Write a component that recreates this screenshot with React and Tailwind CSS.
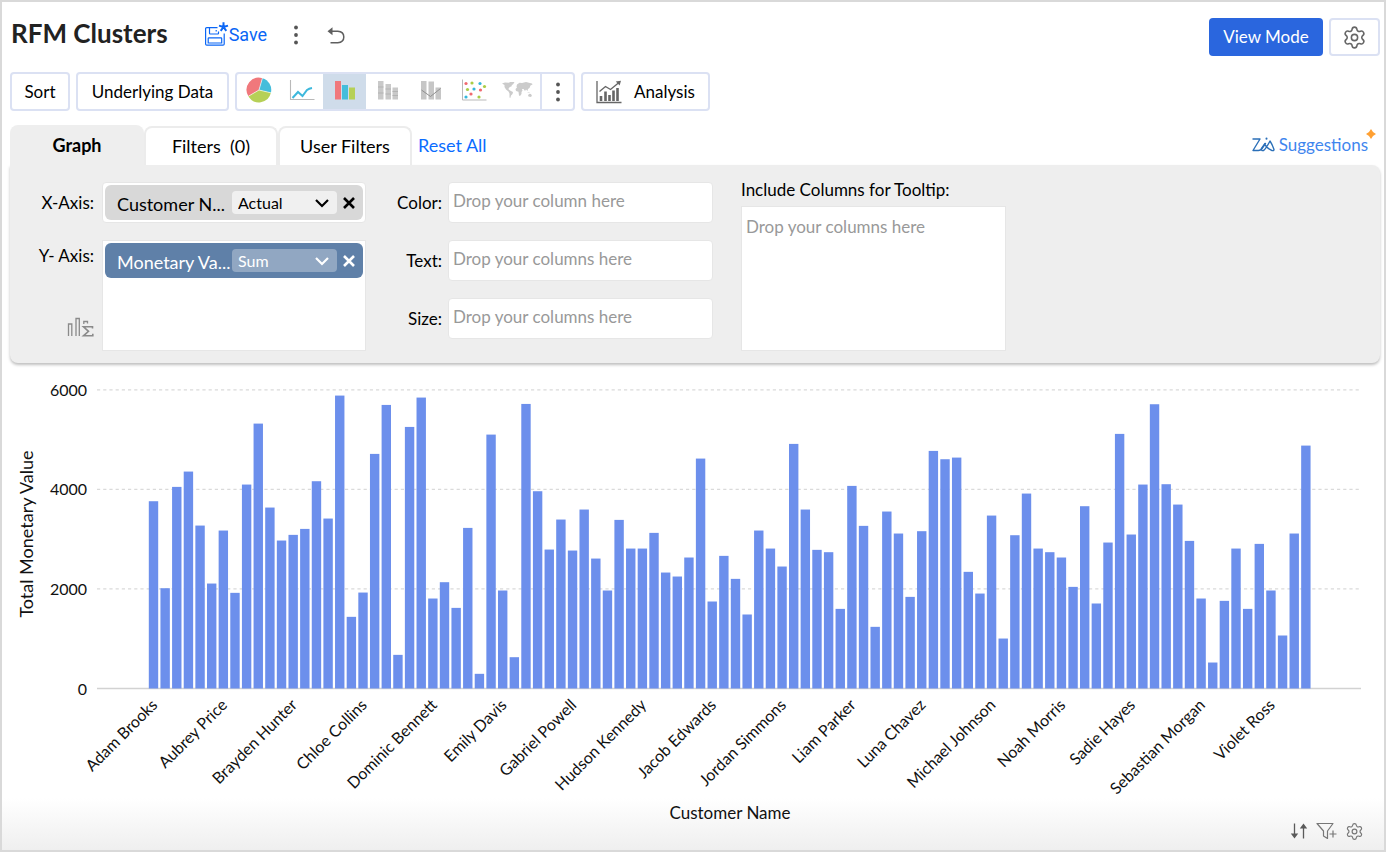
import React from 'react'
import { Settings } from 'lucide-react'

const VALUES = [
  3763, 2015, 4051, 4359, 3274, 2109, 3174, 1922, 4098, 5323, 3636, 2973, 3087, 3207, 4165, 3415, 5886, 1440, 1928, 4714,
  5698, 676, 5256, 5846, 1808, 2136, 1620, 3227, 295, 5102, 1969, 629, 5718, 3964, 2792, 3395, 2772, 3596, 2611, 1969,
  3388, 2812, 2812, 3127, 2330, 2250, 2632, 4620, 1748, 2665, 2203, 1487, 3174, 2812, 2451, 4915, 3596, 2786, 2739, 1600,
  4071, 3268, 1239, 3556, 3114, 1841, 3161, 4774, 4607, 4640, 2344, 1908, 3475, 1004, 3080, 3917, 2812, 2739, 2632, 2042,
  3663, 1708, 2933, 5116, 3094, 4098, 5712, 4105, 3696, 2966, 1808, 522, 1761, 2812, 1600, 2906, 1969, 1065, 3114, 4881,
]

// one name for every sixth bar
const NAMES = [
  'Adam Brooks', 'Aubrey Price', 'Brayden Hunter', 'Chloe Collins', 'Dominic Bennett', 'Emily Davis',
  'Gabriel Powell', 'Hudson Kennedy', 'Jacob Edwards', 'Jordan Simmons', 'Liam Parker', 'Luna Chavez',
  'Michael Johnson', 'Noah Morris', 'Sadie Hayes', 'Sebastian Morgan', 'Violet Ross',
]

const TICKS = [0, 2000, 4000, 6000]

const PieIcon = () => (
  <svg width="26" height="26" viewBox="0 0 26 26">
    <path d="M13 13 L2.4 19.2 A12.2 12.2 0 0 1 16.4 1.2 Z" fill="#f0787c" />
    <path d="M13 13 L16.4 1.2 A12.2 12.2 0 0 1 24.9 15.8 Z" fill="#45bddb" />
    <path d="M13 13 L24.9 15.8 A12.2 12.2 0 0 1 2.4 19.2 Z" fill="#b6d057" />
    <path d="M13 13 L2.4 19.2 M13 13 L16.4 1.2 M13 13 L24.9 15.8" stroke="#fff" strokeWidth=".6" />
  </svg>
)

const LineIcon = () => (
  <svg width="26" height="22" viewBox="0 0 26 22" fill="none">
    <path d="M1.5 1 V20.5 H25.5" stroke="#b9b9b9" strokeWidth="1.1" />
    <path d="M3.5 19 L9 13 L13.5 17 L18 11 Q20 9.5 23 9" stroke="#3db8dc" strokeWidth="2" />
  </svg>
)

const BarIcon = () => (
  <svg width="22" height="20" viewBox="0 0 22 20">
    <rect x="1" y="1" width="6" height="18.5" fill="#f0787c" />
    <rect x="8" y="5" width="6" height="14.5" fill="#45bddb" />
    <rect x="15" y="7.5" width="6" height="12" fill="#b6d057" />
  </svg>
)

const StackedIcon = () => (
  <svg width="22" height="20" viewBox="0 0 22 20">
    <path d="M1 1h5.5v18.5h-5.5z M8.5 4h5.5v15.5h-5.5z M15.5 7.5h5.5v12h-5.5z" fill="#c9c9c9" />
    <path d="M1 6.500h5.500v1h-5.500z M1 12.500h5.500v1h-5.500z M8.500 8.500h5.500v1h-5.500z M8.500 13.500h5.500v1h-5.500z M15.500 11h5.500v1h-5.500z M15.500 15h5.500v1h-5.500z" fill="#b4b4b4" />
  </svg>
)

const ComboIcon = () => (
  <svg width="22" height="20" viewBox="0 0 22 20">
    <path d="M1 1h5.5v18.5h-5.5z M8.500 1.500h5.5v18h-5.5z M15.500 7.500h5.500v12h-5.500z" fill="#c6c6c6" />
    <path d="M1.500 10 L10.500 16.500 L20.500 8.500" fill="none" stroke="#8f8f8f" strokeWidth="1" />
  </svg>
)

const ScatterIcon = () => (
  <svg width="26" height="22" viewBox="0 0 26 22">
    <path d="M1.5 0.5 V21 H25.5" fill="none" stroke="#b9b9b9" strokeWidth="1" />
    <g fill="#f0696f"><circle cx="5" cy="4.5" r="1.6" /><circle cx="19.500" cy="11" r="1.6" /><circle cx="10" cy="15" r="1.6" /></g>
    <g fill="#a9cc45"><circle cx="11" cy="4" r="1.6" /><circle cx="23.500" cy="7.5" r="1.6" /><circle cx="6.5" cy="10.5" r="1.6" /><circle cx="18" cy="18" r="1.6" /></g>
    <g fill="#35b7dc"><circle cx="19" cy="4.500" r="1.6" /><circle cx="13" cy="10" r="1.6" /><circle cx="5" cy="18" r="1.6" /></g>
  </svg>
)

const MapIcon = () => (
  <svg width="32" height="18" viewBox="0 0 32 18" fill="#cbcbcb">
    <path d="M1 2.500 L4 1.500 L8 1.800 L9 1 L13.500 1 L12 3.500 L10.500 4 L11 5 L9 6 L7.800 7 L7.500 8.300 L9 9.500 L12 11 L11.500 13 L10 14.500 L9.300 17 L8.500 16.500 L8.500 12.500 L7.500 10.500 L5 8.500 L3.500 6 L3.500 4 Z" />
    <path d="M15.500 5.500 L16 3.500 L18.500 1.800 L21 2 L25 1 L31 2.500 L31.500 3.500 L29.500 4.500 L28.500 7 L27 8 L26.500 10 L25 8.500 L24 10 L22.500 8 L21 8 L21.500 9.500 L20.500 11 L20.500 13 L19 15 L18 14.500 L17.500 10.800 L15 10 L14.500 8 L16 6.500 Z" />
    <path d="M26 11 L29 11.500 L28 12 Z M27 14 L28.500 12.800 L30 13 L31 15 L29.500 16 L27.500 15.500 Z" />
  </svg>
)

const DotsIcon = () => (
  <svg width="6" height="20" viewBox="0 0 6 20" fill="#555">
    <circle cx="3" cy="2.5" r="1.9" />
    <circle cx="3" cy="10" r="1.9" />
    <circle cx="3" cy="17.5" r="1.9" />
  </svg>
)

const SaveIcon = () => (
  <svg width="25" height="26" viewBox="0 0 25 26" fill="none" stroke="#0a66f5" strokeWidth="1.2">
    <path d="M13.500 5.600 H2.800 Q1.600 5.600 1.600 6.800 V22 Q1.600 23.200 2.800 23.200 H19 Q20.200 23.200 20.200 22 V11.500" />
    <path d="M5.500 5.800 V11.300 Q5.500 12 6.200 12 H13.800 Q14.500 12 14.500 11.300 V9.500" />
    <path d="M4.200 21 V16.500 Q4.200 15.800 4.900 15.800 H17 Q17.700 15.800 17.700 16.500 V21 Z" />
    <path d="M12.200 8 V9.600" />
    <path d="M19.500 5 V0.300 M19.500 5 L24 3.600 M19.500 5 L22.300 8.900 M19.500 5 L16.700 8.900 M19.500 5 L15 3.600" strokeWidth="2" />
  </svg>
)

const UndoIcon = () => (
  <svg width="18" height="18" viewBox="0 0 18 18" fill="none" stroke="#5f5f5f" strokeWidth="1.5">
    <path d="M3 5.200 H10.800 Q16.800 5.600 16.800 11 Q16.800 16.300 10.800 16.700 H3.500" />
    <path d="M5.500 1.200 V9.200 L0.500 5.200 Z" fill="#5f5f5f" stroke="none" />
  </svg>
)

const AnalysisIcon = () => (
  <svg width="26" height="24" viewBox="0 0 26 24" fill="none" stroke="#666">
    <path d="M1 1 V22.5 H25.5" strokeWidth="1.3" />
    <path d="M3.500 11.500 L9.500 6.500 L14.500 9.500 L23 2.500" strokeWidth="1.4" />
    <path d="M19.800 1.500 L25 0.800 L23.600 5.500 Z" fill="#666" stroke="none" />
    <path d="M5 16 V21 M9.500 11.500 V21 M13.500 15 V21 M17.500 10.500 V21 M21.500 8 V21" strokeWidth="2.6" />
  </svg>
)

const ZiaIcon = () => (
  <svg width="23" height="16" viewBox="0 0 23 16" fill="none" stroke="#2b6fb8" strokeWidth="1.4" strokeLinejoin="round" strokeLinecap="round">
    <path d="M1 2 H8 L1 13.500 H6.500 Q8.500 13.500 10 11.500 L13.500 6.500" />
    <path d="M13 6.500 L9.500 11.500 Q9 14 11.500 13.500 Q13.500 12.500 18 4 Q20 7 22 12.500 Q22 14 20 13.500 Q16 12 13.500 8.500" />
    <path d="M14.500 1.500 V1.700" strokeWidth="2" />
  </svg>
)

const SummaryIcon = () => (
  <svg width="27" height="20" viewBox="0 0 27 20" fill="none" stroke="#8a8a8a" strokeWidth="1.3">
    <path d="M1.500 19 V7 H4.800 V19" />
    <path d="M9 19 V1.500 H12.300 V19" />
    <path d="M16.800 7 V4.500 H20.500 V6.500" />
    <path d="M25.500 11.500 V9.800 H16.500 L21.500 14.300 L16.500 18.800 H25.800 V16.800" strokeWidth="1.6" />
  </svg>
)

const CloseIcon = () => (
  <svg width="12" height="12" viewBox="0 0 12 12" fill="none" stroke="currentColor" strokeWidth="2.6">
    <path d="M1 1 L11 11 M11 1 L1 11" />
  </svg>
)

const SortArrowsIcon = () => (
  <svg width="18" height="18" viewBox="0 0 18 18" fill="none" stroke="#5a5a5a" strokeWidth="1.3">
    <path d="M4.500 1.500 V12 M13.500 16.500 V6" />
    <path d="M0.800 11.500 H8.200 L4.500 16.500 Z M9.800 6.500 H17.200 L13.500 1.500 Z" fill="#5a5a5a" stroke="none" />
  </svg>
)

const FilterAddIcon = () => (
  <svg width="21" height="18" viewBox="0 0 21 18" fill="none" stroke="#777" strokeWidth="1.2">
    <path d="M1 1.500 H17 L11.500 9 V16.500 L7.500 14 V9 Z" strokeLinejoin="round" />
    <path d="M13.500 12 H20.500 M17 8.500 V15.500" />
  </svg>
)

const CHART_TYPES = [
  { key: 'pie', label: 'Pie', icon: PieIcon },
  { key: 'line', label: 'Line', icon: LineIcon },
  { key: 'bar', label: 'Bar', icon: BarIcon },
  { key: 'stacked', label: 'Stacked bar', icon: StackedIcon },
  { key: 'combo', label: 'Combination', icon: ComboIcon },
  { key: 'scatter', label: 'Scatter', icon: ScatterIcon },
  { key: 'map', label: 'Map', icon: MapIcon },
]

const SHELVES = [
  { key: 'color', label: 'Color:', hint: 'Drop your column here' },
  { key: 'text', label: 'Text:', hint: 'Drop your columns here' },
  { key: 'size', label: 'Size:', hint: 'Drop your columns here' },
]

function ToolButton({ className = '', children }) {
  return (
    <button className={`flex items-center justify-center rounded border-2 border-[#dbe1f3] bg-white ${className}`}>
      {children}
    </button>
  )
}

function ColumnPill({ id, name, fn, blue }) {
  return (
    <div
      className={`flex h-[35px] items-center rounded-md pl-3 pr-2 ${
        blue ? 'bg-[#5f80a8] text-white' : 'bg-[#d8d8d8] text-black'
      }`}
    >
      <span className="w-[115px] shrink-0 whitespace-nowrap pt-0.5 text-lg leading-6">{name}</span>
      <span className="relative flex-1">
        <select
          id={id}
          defaultValue={fn}
          className={`block h-[23px] w-full appearance-none rounded px-1.5 text-base leading-5 outline-none ${
            blue ? 'bg-[#91a7c2]' : 'bg-[#f0f0f0]'
          }`}
        >
          <option>{fn}</option>
        </select>
        <svg className="pointer-events-none absolute right-2 top-2" width="14" height="9" viewBox="0 0 14 9" fill="none" stroke="currentColor" strokeWidth="2.2">
          <path d="M1 1 L7 7 L13 1" />
        </svg>
      </span>
      <button aria-label={`Remove ${name}`} className="ml-1.5">
        <CloseIcon />
      </button>
    </div>
  )
}

function Chart() {
  const base = 325.5
  const y = (v) => base - (v * 298.6) / 6000
  const x = (i) => 143.5 + i * 11.64

  return (
    <svg viewBox="0 0 1370 462" className="block w-full fill-[#111] text-base" role="img" aria-label="Total monetary value by customer">
      {TICKS.map((t) => (
        <g key={t}>
          <line
            x1="87"
            x2="1351"
            y1={y(t)}
            y2={y(t)}
            stroke={t === 0 ? '#d2d2d2' : '#dadada'}
            strokeWidth={t === 0 ? 1.5 : 1.3}
            strokeDasharray={t === 0 ? undefined : '3.2 3'}
          />
          <text x="77" y={y(t) + 6} textAnchor="end">{t}</text>
        </g>
      ))}
      {VALUES.map((v, i) => (
        <rect key={i} x={x(i) - 4.7} y={y(v)} width="9.4" height={base - y(v)} fill="#6c8fec" />
      ))}
      {NAMES.map((name, i) => (
        <text key={name} textAnchor="end" transform={`translate(${x(i * 6) + 5} 343) rotate(-45)`}>
          {name}
        </text>
      ))}
      <text textAnchor="middle" transform="translate(23 171) rotate(-90)" className="text-lg">Total Monetary Value</text>
      <text x="720" y="456" textAnchor="middle" className="text-[17px]">Customer Name</text>
    </svg>
  )
}

export default function App() {
  return (
    <div className="min-h-screen border-2 border-[#d9d9d9] bg-[linear-gradient(to_bottom,#fff_calc(100%-52px),#efefef)] pl-2 pr-1 pt-4 font-['Lato',sans-serif] text-[17px] leading-6 text-black">
      <header className="flex h-[38px] items-center">
        <h1 className="pb-2 pl-px text-[26px] font-bold leading-8 text-[#222]">RFM Clusters</h1>
        <button className="ml-9 flex items-center pb-1 font-['Roboto',sans-serif] text-lg leading-6 text-[#0a66f5]">
          <SaveIcon />
          Save
        </button>
        <button aria-label="More" className="ml-[26px] pb-1">
          <DotsIcon />
        </button>
        <button aria-label="Undo" className="ml-7 pb-1">
          <UndoIcon />
        </button>
        <button className="ml-auto h-full w-[114px] rounded bg-[#2a66de] text-white">View Mode</button>
        <ToolButton className="ml-1.5 h-full w-[51px]">
          <Settings size={25} strokeWidth={1.5} color="#666" aria-label="Settings" />
        </ToolButton>
      </header>

      <div className="mt-4 flex h-[39px] gap-1.5">
        <ToolButton className="w-[60px]">Sort</ToolButton>
        <ToolButton className="w-[153px]">Underlying Data</ToolButton>
        <div className="flex rounded border-2 border-[#dbe1f3]">
          {CHART_TYPES.map(({ key, label, icon: IconCmp }) => (
            <button
              key={key}
              aria-label={label}
              className={`flex w-[43px] items-center justify-center pb-1 ${key === 'bar' ? 'bg-[#cfdcea]' : ''}`}
            >
              <IconCmp />
            </button>
          ))}
          <button aria-label="More chart types" className="ml-0.5 flex w-[33px] items-center justify-center border-l-2 border-[#dbe1f3]">
            <DotsIcon />
          </button>
        </div>
        <ToolButton className="w-[129px] gap-3">
          <AnalysisIcon />
          Analysis
        </ToolButton>
      </div>

      <div className="mt-3.5 flex h-10 items-end text-lg leading-6">
        <button className="h-10 w-[134px] rounded-t-lg bg-[#eee] font-bold">Graph</button>
        <button className="h-[39px] w-[134px] whitespace-pre rounded-t-lg border-2 border-b-0 border-[#ececec] bg-white pb-0.5">{'Filters  (0)'}</button>
        <button className="h-[39px] w-[134px] rounded-t-lg border-2 border-b-0 border-[#ececec] bg-white pb-0.5">User Filters</button>
        <a href="#reset" className="mb-2 ml-1.5 text-[#0a6cff]">Reset All</a>
        <a href="#suggestions" className="relative mb-2 ml-auto mr-3 flex items-center gap-1 text-[17px] text-[#3f86ee]">
          <ZiaIcon />
          Suggestions
          <svg className="absolute -right-2 -top-1" width="10" height="10" viewBox="0 0 10 10" fill="#ffa032">
            <path d="M5 0 Q6.500 3.500 10 5 Q6.500 6.500 5 10 Q3.500 6.500 0 5 Q3.500 3.500 5 0" />
          </svg>
        </a>
      </div>

      <section className="flex rounded-b-lg rounded-tr-lg bg-[#eee] pb-3 pt-[17px] shadow-[0_2px_3px_rgba(0,0,0,0.25)]">
        <div className="grid grid-cols-[84px_264px] content-start gap-x-2 gap-y-[17px]">
          <label htmlFor="x-fn" className="self-center text-right">X-Axis:</label>
          <div className="rounded-sm border border-[#e6e6e6] bg-white p-0.5">
            <ColumnPill id="x-fn" name="Customer N..." fn="Actual" />
          </div>
          <div className="flex flex-col items-end justify-between pb-3.5 pt-1">
            <label htmlFor="y-fn">Y- Axis:</label>
            <SummaryIcon />
          </div>
          <div className="h-[111px] border border-[#e6e6e6] bg-white p-0.5">
            <ColumnPill id="y-fn" name="Monetary Va..." fn="Sum" blue />
          </div>
        </div>

        <div className="ml-6 grid grid-cols-[52px_265px] content-start gap-x-1.5 gap-y-[17px]">
          {SHELVES.map((s) => (
            <React.Fragment key={s.key}>
              <label htmlFor={s.key} className="self-center text-right">{s.label}</label>
              <input
                id={s.key}
                placeholder={s.hint}
                className="h-[41px] rounded-sm border border-[#e6e6e6] bg-white px-1 pb-1 placeholder:text-[#999]"
              />
            </React.Fragment>
          ))}
        </div>

        <div className="ml-7 flex w-[265px] flex-col">
          <label htmlFor="tooltip" className="-mt-1 whitespace-nowrap">Include Columns for Tooltip:</label>
          <textarea
            id="tooltip"
            placeholder="Drop your columns here"
            className="mt-1 h-[145px] resize-none border border-[#e6e6e6] bg-white px-1 py-2 placeholder:text-[#999]"
          />
        </div>
      </section>

      <Chart />

      <footer className="-mt-1 flex h-5 items-center justify-end gap-2 pr-4">
        <button aria-label="Sort order"><SortArrowsIcon /></button>
        <button aria-label="Add filter"><FilterAddIcon /></button>
        <button aria-label="Chart settings"><Settings size={19} strokeWidth={1.5} color="#777" /></button>
      </footer>
    </div>
  )
}
